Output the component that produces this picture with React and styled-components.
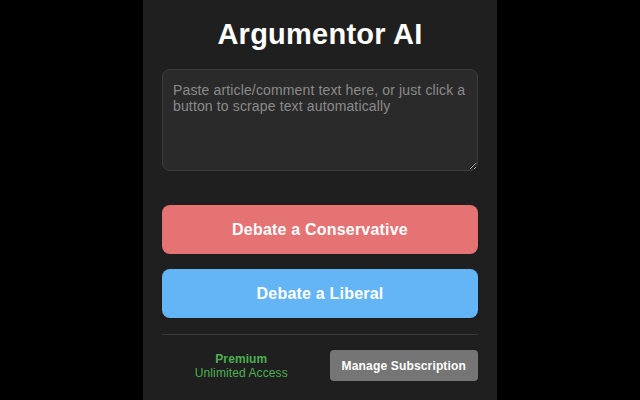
import React from "react";
import styled, { createGlobalStyle } from "styled-components";

const GlobalStyle = createGlobalStyle`
  html, body {
    margin: 0;
    padding: 0;
    background: #000000;
    font-family: "Liberation Sans", Arial, sans-serif;
  }
  * { box-sizing: border-box; }
`;

const Panel = styled.div`
  width: 354px;
  min-height: 100vh;
  margin: 0 auto;
  background: #1f1f1f;
  padding: 18px 19px 20px;
  display: flex;
  flex-direction: column;
`;

const Title = styled.h1`
  margin: 0 0 18px;
  font-size: 29px;
  line-height: 33px;
  font-weight: 700;
  letter-spacing: 0.25px;
  color: #ffffff;
  text-align: center;
`;

const TextInput = styled.textarea`
  width: 100%;
  height: 102px;
  margin: 0 0 34px;
  padding: 12px 10px;
  background: #2a2a2a;
  border: 1px solid #3d3d3d;
  border-radius: 8px;
  color: #e0e0e0;
  font-family: "Liberation Sans", Arial, sans-serif;
  font-size: 14px;
  line-height: 16px;
  letter-spacing: 0.14px;
  resize: vertical;
  outline: none;
  &::placeholder {
    color: #8a8a8a;
  }
`;

const DebateButton = styled.button`
  width: 100%;
  height: 49px;
  margin: 0 0 15px;
  border: none;
  border-radius: 8px;
  background: ${(p) => p.$bg};
  color: #ffffff;
  font-family: "Liberation Sans", Arial, sans-serif;
  font-size: 16px;
  font-weight: 700;
  letter-spacing: 0.2px;
  cursor: pointer;
`;

const Divider = styled.hr`
  margin: 1px 0 15px;
  border: none;
  border-top: 1px solid #3a3a3a;
`;

const Footer = styled.div`
  display: flex;
  align-items: center;
  gap: 9px;
`;

const Status = styled.div`
  flex: 1;
  text-align: center;
  color: #4caf50;
  font-size: 12px;
  line-height: 14px;
  letter-spacing: 0.1px;
`;

const StatusLabel = styled.div`
  font-weight: 700;
`;

const ManageButton = styled.button`
  height: 31px;
  padding: 0 12px;
  border: none;
  border-radius: 4px;
  background: #757575;
  color: #ffffff;
  font-family: "Liberation Sans", Arial, sans-serif;
  font-size: 12px;
  font-weight: 700;
  letter-spacing: 0.16px;
  cursor: pointer;
`;

export default function App() {
  return (
    <>
      <GlobalStyle />
      <Panel>
        <Title>Argumentor AI</Title>
        <TextInput placeholder="Paste article/comment text here, or just click a button to scrape text automatically" />
        <DebateButton $bg="#e57373">Debate a Conservative</DebateButton>
        <DebateButton $bg="#64b5f6">Debate a Liberal</DebateButton>
        <Divider />
        <Footer>
          <Status>
            <StatusLabel>Premium</StatusLabel>
            <div>Unlimited Access</div>
          </Status>
          <ManageButton>Manage Subscription</ManageButton>
        </Footer>
      </Panel>
    </>
  );
}
